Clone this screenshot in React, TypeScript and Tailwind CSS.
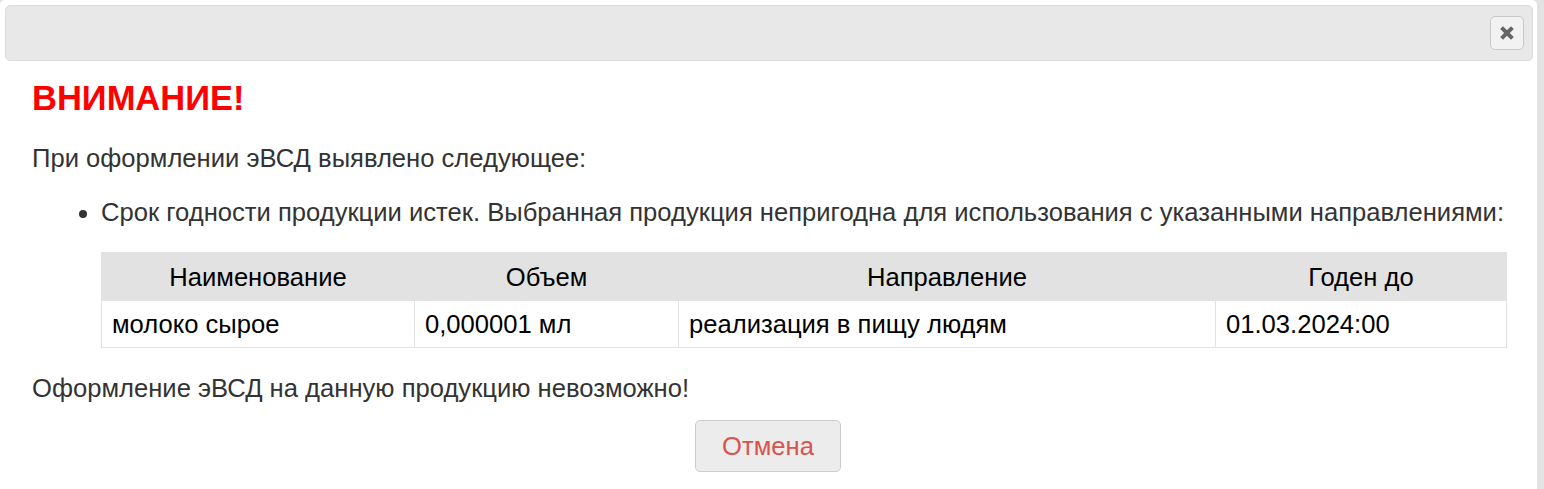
const rows = [
  { name: "молоко сырое", volume: "0,000001 мл", target: "реализация в пищу людям", until: "01.03.2024:00" },
]

function CloseIcon() {
  return (
    <svg width="16" height="16" viewBox="0 0 16 16" className="text-[#666]">
      <path d="M2.6 2.6 L13.4 13.4 M13.4 2.6 L2.6 13.4" stroke="currentColor" strokeWidth="4" strokeLinecap="butt" />
    </svg>
  )
}

export default function App() {
  return (
    <div className="w-[1544px] h-[489px] bg-[#e2e2e2] overflow-hidden font-['Liberation_Sans',Arial,sans-serif]">
      <div className="w-[1537px] h-[500px] bg-white rounded-[5px] pt-[5px] pl-[5px] pr-[4px]">
        {/* title bar */}
        <div className="h-[56px] bg-[#e8e8e8] border border-[#dcdcdc] rounded-[5px] flex items-center justify-end pr-[8px]">
          <button className="w-[34px] h-[34px] rounded-[5px] border border-[#c8c8c8] bg-[#f2f2f2] flex items-center justify-center">
            <CloseIcon />
          </button>
        </div>

        <div className="px-[27px] text-[#333] text-[25.6px] leading-[30px]">
          <h1 className="mt-[17px] text-[34.5px] leading-[40px] font-bold text-[#ff0000]">ВНИМАНИЕ!</h1>
          <p className="mt-[25px]">При оформлении эВСД выявлено следующее:</p>
          <ul className="mt-[24px] pl-[69px] list-disc">
            <li>Срок годности продукции истек. Выбранная продукция непригодна для использования с указанными направлениями:</li>
          </ul>
          <table className="ml-[69px] mt-[25px] w-[1406px] border-collapse text-black">
            <thead>
              <tr className="bg-[#e2e2e2] h-[48px]">
                <th className="w-[313px] font-normal text-center border border-[#e2e2e2]">Наименование</th>
                <th className="w-[264px] font-normal text-center border border-l-white border-[#e2e2e2]">Объем</th>
                <th className="w-[537px] font-normal text-center border border-l-white border-[#e2e2e2]">Направление</th>
                <th className="font-normal text-center border border-l-white border-[#e2e2e2]">Годен до</th>
              </tr>
            </thead>
            <tbody>
              {rows.map((r) => (
                <tr key={r.name} className="h-[47px]">
                  <td className="px-[10px] border border-[#e2e2e2]">{r.name}</td>
                  <td className="px-[10px] border border-[#e2e2e2]">{r.volume}</td>
                  <td className="px-[10px] border border-[#e2e2e2]">{r.target}</td>
                  <td className="px-[10px] border border-[#e2e2e2]">{r.until}</td>
                </tr>
              ))}
            </tbody>
          </table>
          <p className="mt-[25px]">Оформление эВСД на данную продукцию невозможно!</p>
          <div className="mt-[17px] flex justify-center">
            <button className="w-[146px] h-[52px] ml-[-2px] rounded-[5px] border border-[#cccccc] bg-[#ececec] text-[#d9534f]">
              Отмена
            </button>
          </div>
        </div>
      </div>
    </div>
  )
}
